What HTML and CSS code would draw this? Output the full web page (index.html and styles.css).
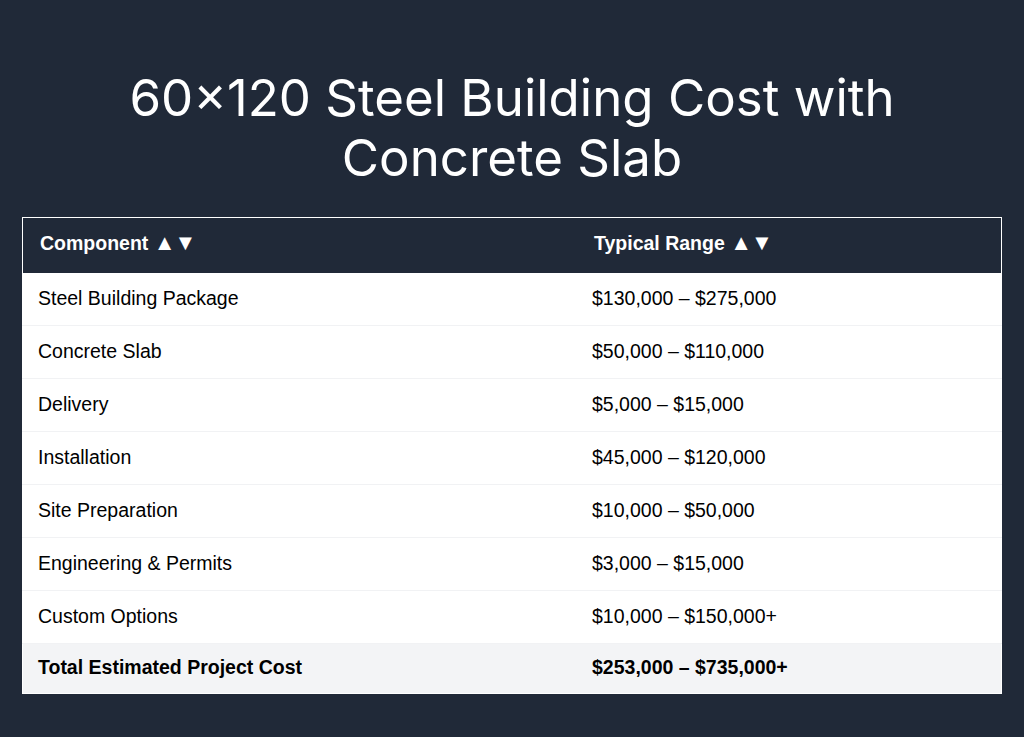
FILE: index.html
```html
<!DOCTYPE html>
<html lang="en">
<head>
    <meta charset="UTF-8">
    <meta name="viewport" content="width=device-width, initial-scale=1.0">
    <title>60×120 Steel Building Cost with Concrete Slab</title>
    <link rel="stylesheet" href="styles.css">
</head>
<body>
    <div class="container">
        <h1>60×120 Steel Building Cost with<br>Concrete Slab</h1>
        <table class="cost-table">
            <thead>
                <tr>
                    <th class="col-component">Component <span class="sort">▲▼</span></th>
                    <th>Typical Range <span class="sort">▲▼</span></th>
                </tr>
            </thead>
            <tbody>
                <tr><td>Steel Building Package</td><td>$130,000 – $275,000</td></tr>
                <tr><td>Concrete Slab</td><td>$50,000 – $110,000</td></tr>
                <tr><td>Delivery</td><td>$5,000 – $15,000</td></tr>
                <tr><td>Installation</td><td>$45,000 – $120,000</td></tr>
                <tr><td>Site Preparation</td><td>$10,000 – $50,000</td></tr>
                <tr><td>Engineering &amp; Permits</td><td>$3,000 – $15,000</td></tr>
                <tr><td>Custom Options</td><td>$10,000 – $150,000+</td></tr>
                <tr class="total-row"><td>Total Estimated Project Cost</td><td>$253,000 – $735,000+</td></tr>
            </tbody>
        </table>
    </div>
</body>
</html>
```

FILE: styles.css
```css
body {
    margin: 0;
    padding: 0;
    background: #202938;
    font-family: "Liberation Sans", Arial, sans-serif;
    min-height: 100vh;
}
.container {
    padding: 68px 22px 0;
}
h1 {
    font-family: Inter, "Noto Sans", sans-serif;
    font-weight: 400;
    font-size: 51px;
    line-height: 60px;
    color: #fff;
    text-align: center;
    margin: 0 0 29px;
}
.cost-table {
    width: 100%;
    border-collapse: collapse;
    border: 1px solid #fff;
    background: #fff;
}
.cost-table th {
    background: #202938;
    color: #fff;
    font-size: 19.5px;
    font-weight: bold;
    text-align: left;
    height: 49px;
    padding: 0 17px 6px;
}
.cost-table th.col-component {
    width: 520px;
}
.sort {
    font-size: 22px;
    letter-spacing: -1px;
}
.cost-table td {
    font-size: 19.5px;
    color: #000;
    height: 50px;
    padding: 0 15px 2px;
    border-bottom: 1px solid #f1f2f4;
}
.total-row td {
    background: #f3f4f6;
    font-weight: bold;
    border-bottom: none;
    height: 47px;
}
```
